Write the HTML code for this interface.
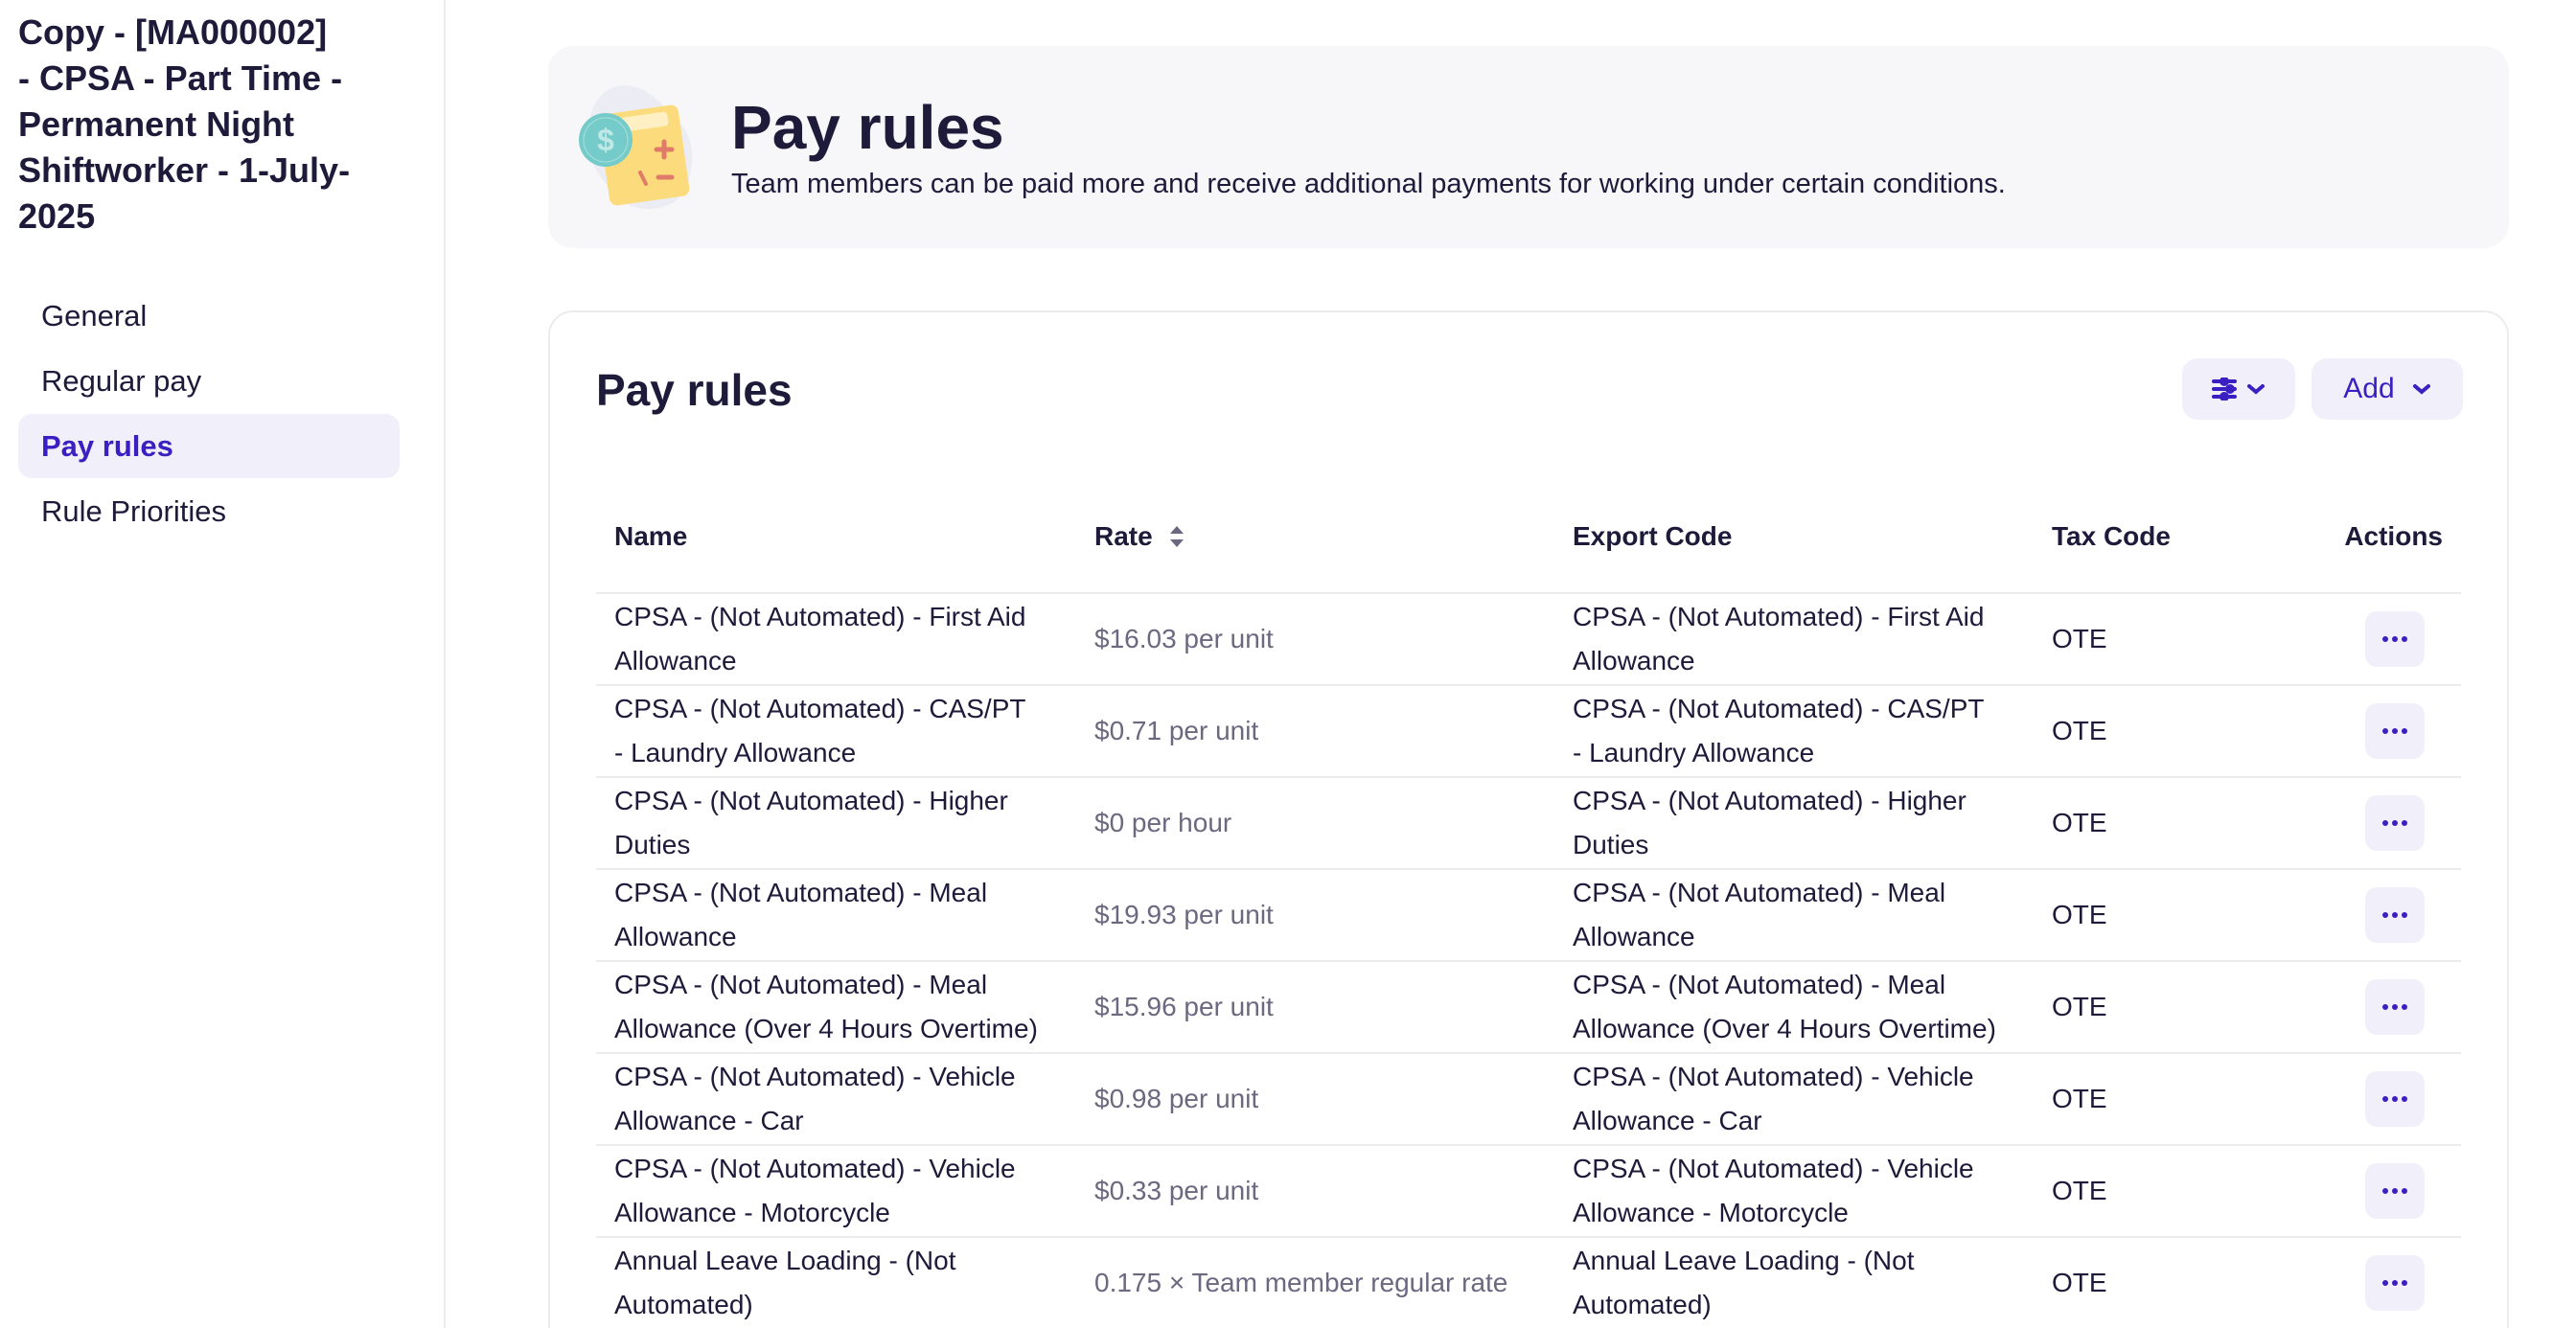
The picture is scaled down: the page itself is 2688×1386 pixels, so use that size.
<!DOCTYPE html>
<html style="overflow:hidden;height:1386px"><head><meta charset="utf-8"><style>
*{box-sizing:border-box;margin:0;padding:0}
body{width:2688px;height:1386px;overflow:hidden;background:#fff;font-family:"Liberation Sans",sans-serif;color:#1e1a3a;position:relative}
.side{position:absolute;left:0;top:0;width:465px;height:1386px;border-right:2px solid #ececf0}
.side h1{position:absolute;left:19px;top:10px;width:420px;font-size:36px;line-height:48px;font-weight:700;white-space:nowrap}
.nav{position:absolute;left:19px;width:398px;height:67px;line-height:67px;padding-left:24px;font-size:31px;border-radius:14px}
.nav.act{background:#f1f0fa;color:#3b1fc2;font-weight:700}
.hdr{position:absolute;left:572px;top:48px;width:2046px;height:211px;background:#f7f7fa;border-radius:26px}
.hdr h2{position:absolute;left:191px;top:48px;font-size:64px;font-weight:700}
.hdr p{position:absolute;left:191px;top:128px;font-size:29px}
.card{position:absolute;left:572px;top:324px;width:2046px;height:1100px;border:2px solid #ececf0;border-radius:26px}
.card h3{position:absolute;left:48px;top:54px;font-size:46px;font-weight:700}
.btn{position:absolute;top:48px;height:64px;background:#f1f0fa;border-radius:16px;color:#3b1fc2;font-size:30px;display:flex;align-items:center;justify-content:center;gap:18px}
table{position:absolute;left:48px;top:218px;width:1946px;border-collapse:collapse;table-layout:fixed;font-size:28px}
th{text-align:left;font-weight:700;vertical-align:middle;padding:0 19px 42px;border-bottom:2px solid #ececf0}
td{height:96px;padding:0 19px;border-bottom:2px solid #ececf0;line-height:46px;vertical-align:middle}
td.r{color:#6b6880}
.dots{width:62px;height:58px;background:#f1f0fa;border-radius:12px;margin-left:auto;margin-right:19px;display:flex;align-items:center;justify-content:center;gap:4px}
.dots i{width:6px;height:6px;border-radius:3px;background:#3b1fc2;display:block}
</style></head><body>
<div class="side">
<h1>Copy - [MA000002]<br>- CPSA - Part Time -<br>Permanent Night<br>Shiftworker - 1-July-<br>2025</h1>
<div class="nav" style="top:296px">General</div>
<div class="nav" style="top:364px">Regular pay</div>
<div class="nav act" style="top:432px">Pay rules</div>
<div class="nav" style="top:500px">Rule Priorities</div>
</div>
<div class="hdr">
<svg style="position:absolute;left:32px;top:36px" width="140" height="140" viewBox="0 0 140 140">
<path d="M40 6 C70 0 92 30 102 42 C125 55 122 110 102 125 C80 140 50 136 40 118 C20 104 8 82 10 50 C12 24 24 10 40 6Z" fill="#ececf5"/>
<rect x="26" y="30" width="84" height="96" rx="8" fill="#fbdb7c" transform="rotate(-8 68 78)"/>
<rect x="46" y="36" width="52" height="15" rx="4" fill="#fef0c2" transform="rotate(-8 68 78)"/>
<path d="M89 64v16M81 72h16M83 101h14" stroke="#e07b6a" stroke-width="5" stroke-linecap="round"/>
<path d="M64 96l6 12" stroke="#e07b6a" stroke-width="4" stroke-linecap="round"/>
<circle cx="28" cy="62" r="28" fill="#75cbc9"/>
<circle cx="28" cy="62" r="23" fill="none" stroke="#a8e0dc" stroke-width="1"/>
<text x="28" y="73" font-size="32" font-weight="700" fill="#bfe9e6" text-anchor="middle" font-family="Liberation Sans">$</text>
</svg>
<h2>Pay rules</h2>
<p>Team members can be paid more and receive additional payments for working under certain conditions.</p>
</div>
<div class="card">
<h3>Pay rules</h3>
<div class="btn" style="left:1703px;width:118px;gap:10px"><svg width="26" height="24" viewBox="0 0 26 24" stroke="#3b1fc2" stroke-width="4" stroke-linecap="round"><path d="M2 4h22M2 12h22M2 20h22"/><circle cx="13" cy="4" r="3" fill="#3b1fc2"/><circle cx="19" cy="12" r="3" fill="#3b1fc2"/><circle cx="13" cy="20" r="3" fill="#3b1fc2"/></svg><svg width="20" height="12" viewBox="0 0 20 12"><path d="M3 3l7 6 7-6" stroke="#3b1fc2" stroke-width="4" fill="none" stroke-linecap="round"/></svg></div>
<div class="btn" style="left:1838px;width:158px">Add <svg width="20" height="12" viewBox="0 0 20 12"><path d="M3 3l7 6 7-6" stroke="#3b1fc2" stroke-width="4" fill="none" stroke-linecap="round"/></svg></div>
<table>
<colgroup><col style="width:501px"><col style="width:499px"><col style="width:500px"><col style="width:260px"><col></colgroup>
<thead><tr><th>Name</th><th>Rate <svg width="20" height="26" viewBox="0 0 20 26" style="vertical-align:-4px;margin-left:8px"><path d="M3 10l7-8 7 8zM3 16l7 8 7-8z" fill="#6b6880"/></svg></th><th>Export Code</th><th>Tax Code</th><th style="text-align:right">Actions</th></tr></thead>
<tbody>
<tr><td>CPSA - (Not Automated) - First Aid Allowance</td><td class="r">$16.03 per unit</td><td>CPSA - (Not Automated) - First Aid Allowance</td><td>OTE</td><td><div class="dots"><i></i><i></i><i></i></div></td></tr>
<tr><td>CPSA - (Not Automated) - CAS/PT<br>- Laundry Allowance</td><td class="r">$0.71 per unit</td><td>CPSA - (Not Automated) - CAS/PT<br>- Laundry Allowance</td><td>OTE</td><td><div class="dots"><i></i><i></i><i></i></div></td></tr>
<tr><td>CPSA - (Not Automated) - Higher Duties</td><td class="r">$0 per hour</td><td>CPSA - (Not Automated) - Higher Duties</td><td>OTE</td><td><div class="dots"><i></i><i></i><i></i></div></td></tr>
<tr><td>CPSA - (Not Automated) - Meal Allowance</td><td class="r">$19.93 per unit</td><td>CPSA - (Not Automated) - Meal Allowance</td><td>OTE</td><td><div class="dots"><i></i><i></i><i></i></div></td></tr>
<tr><td>CPSA - (Not Automated) - Meal Allowance (Over 4 Hours Overtime)</td><td class="r">$15.96 per unit</td><td>CPSA - (Not Automated) - Meal Allowance (Over 4 Hours Overtime)</td><td>OTE</td><td><div class="dots"><i></i><i></i><i></i></div></td></tr>
<tr><td>CPSA - (Not Automated) - Vehicle Allowance - Car</td><td class="r">$0.98 per unit</td><td>CPSA - (Not Automated) - Vehicle Allowance - Car</td><td>OTE</td><td><div class="dots"><i></i><i></i><i></i></div></td></tr>
<tr><td>CPSA - (Not Automated) - Vehicle Allowance - Motorcycle</td><td class="r">$0.33 per unit</td><td>CPSA - (Not Automated) - Vehicle Allowance - Motorcycle</td><td>OTE</td><td><div class="dots"><i></i><i></i><i></i></div></td></tr>
<tr><td>Annual Leave Loading - (Not Automated)</td><td class="r">0.175 × Team member regular rate</td><td>Annual Leave Loading - (Not Automated)</td><td>OTE</td><td><div class="dots"><i></i><i></i><i></i></div></td></tr>
</tbody></table>
</div>
</body></html>
